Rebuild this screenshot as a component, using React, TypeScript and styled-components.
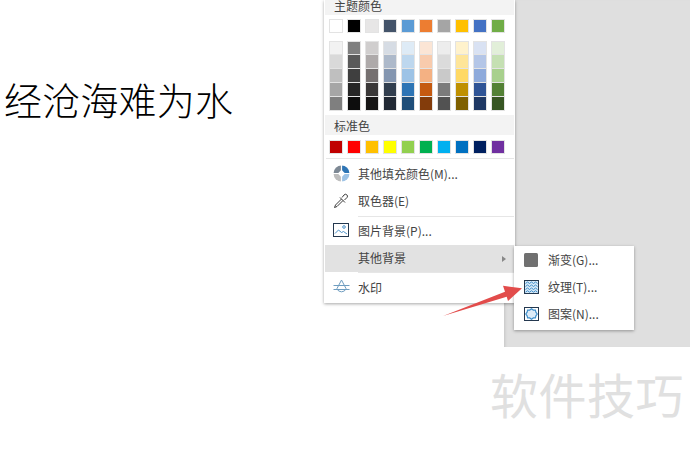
import React from 'react'
import styled, { createGlobalStyle } from 'styled-components'

const CJK = `"Noto Sans CJK SC", "Liberation Sans", sans-serif`

const GlobalStyle = createGlobalStyle`
html, body {
  margin: 0;
  padding: 0;
  background: #fff;
  overflow: hidden;
}
`
const Page = styled.div`
width: 690px;
height: 450px;
background: #fff;
font-family: ${CJK};
`
const TopRow = styled.div`
display: flex;
height: 347px;
`
const Heading = styled.div`
width: 324px;
flex: none;
padding: 75px 0 0 4px;
box-sizing: border-box;
font-family: "Noto Sans CJK SC", serif;
font-weight: 300;
font-size: 38px;
line-height: 48px;
letter-spacing: 0.2px;
color: #000;
white-space: nowrap;
`
const Menu = styled.div`
position: relative;
z-index: 1;
flex: none;
width: 191px;
height: 303px;
margin-right: -11px;
background: #fff;
box-shadow: 0 1px 3px rgba(0, 0, 0, 0.35);
box-sizing: border-box;
padding: 0 0 0 1px;
font-size: 12px;
color: #444;
`
const SectionTitle = styled.div<{ $h: number; $mt?: number; $lh?: number }>`
height: ${p => p.$h}px;
line-height: ${p => p.$lh ?? p.$h}px;
margin-top: ${p => p.$mt ?? 0}px;
background: #f3f3f3;
margin-right: 1px;
padding-left: 9px;
`
const SwatchRow = styled.div<{ $mt: number }>`
display: flex;
gap: 4px;
padding-left: 4px;
margin-top: ${p => p.$mt}px;
`
const Swatch = styled.div<{ $c: string }>`
width: 14px;
height: 14px;
box-sizing: border-box;
background: ${p => p.$c};
border: 1px solid #e3e3e3;
flex: none;
`
const Ramp = styled.div`
display: flex;
flex-direction: column;
width: 14px;
flex: none;
`
const RampCell = styled.div<{ $c: string }>`
height: 14px;
box-sizing: border-box;
background: ${p => p.$c};
border: 1px solid #e3e3e3;
border-top-width: 0;
&:first-child { border-top-width: 1px; }
`
const Divider = styled.div<{ $ml: number; $mt?: number }>`
height: 1px;
background: #e6e6e6;
margin: ${p => p.$mt ?? 0}px 1px 0 ${p => p.$ml}px;
`
const Item = styled.div<{ $h: number; $active?: boolean }>`
position: relative;
display: flex;
align-items: center;
height: ${p => p.$h}px;
box-sizing: border-box;
padding-bottom: 2px;
background: ${p => (p.$active ? '#e2e2e2' : 'transparent')};
margin-right: 1px;
`
const IconSlot = styled.div`
width: 33px;
flex: none;
box-sizing: border-box;
padding-right: 1px;
display: flex;
justify-content: center;
`
const Caret = styled.div`
position: absolute;
right: 8px;
top: 50%;
margin-top: -3px;
border-left: 4px solid #888;
border-top: 3px solid transparent;
border-bottom: 3px solid transparent;
`
const Submenu = styled.div`
position: absolute;
z-index: 2;
left: 189px;
top: 1px;
width: 120px;
height: 84px;
box-sizing: border-box;
background: #fff;
box-shadow: 0 1px 3px rgba(0, 0, 0, 0.35);
`
const SubItem = styled.div`
display: flex;
align-items: center;
height: 27px;
font-size: 12px;
color: #444;
`
const SubIcon = styled.div`
width: 34px;
flex: none;
display: flex;
justify-content: center;
`
const Backdrop = styled.div`
flex: 1;
background: #dfdfdf;
box-shadow: inset 3px 0 3px -2px #c4c4c4;
`
const Watermark = styled.div`
text-align: right;
padding: 15px 6px 0 0;
font-size: 48px;
line-height: 62px;
letter-spacing: 0.5px;
color: #e0e0e0;
`
const ArrowMark = styled.svg`
position: absolute;
z-index: 3;
left: 442px;
top: 280px;
`

const themeBase = ['#ffffff', '#000000', '#e7e6e6', '#44546a', '#5b9bd5', '#ed7d31', '#a5a5a5', '#ffc000', '#4472c4', '#70ad47']
const ramps = [
  ['#f2f2f2', '#d9d9d9', '#bfbfbf', '#a6a6a6', '#7f7f7f'],
  ['#7f7f7f', '#595959', '#3f3f3f', '#262626', '#0d0d0d'],
  ['#d0cece', '#aeaaaa', '#757070', '#3a3838', '#171616'],
  ['#d6dce4', '#adb9ca', '#8496b0', '#323f4f', '#222a35'],
  ['#deebf6', '#bdd7ee', '#9dc3e6', '#2e75b5', '#1f4e79'],
  ['#fbe5d5', '#f8cbad', '#f4b183', '#c55a11', '#833c0b'],
  ['#ededed', '#dbdbdb', '#c9c9c9', '#7b7b7b', '#525252'],
  ['#fff2cc', '#fee599', '#ffd965', '#bf9000', '#7f6000'],
  ['#d9e2f3', '#b4c6e7', '#8eaadb', '#2f5496', '#1f3864'],
  ['#e2efd9', '#c5e0b3', '#a8d08d', '#538135', '#375623'],
]
const standard = ['#c00000', '#ff0000', '#ffc000', '#ffff00', '#92d050', '#00b050', '#00b0f0', '#0070c0', '#002060', '#7030a0']

const FillIcon = () => (
  <svg width="17" height="17" viewBox="0 0 17 17">
    <path d="M8.500.500A8 8 0 0 0 .500 8.500h8z" fill="#7d8894" />
    <path d="M8.500.500a8 8 0 0 1 8 8h-8z" fill="#2e75b5" />
    <path d="M16.500 8.500a8 8 0 0 1-8 8v-8z" fill="#9dc3e6" />
    <path d="M8.500 16.500a8 8 0 0 1-8-8h8z" fill="#bdbdbd" />
    <path d="M8.500 0v17M0 8.500h17" stroke="#fff" strokeWidth="1.200" />
    <path d="M8.500 4.800 12.200 8.500 8.500 12.200 4.800 8.500z" fill="#fff" />
  </svg>
)
const PickerIcon = () => (
  <svg width="16" height="16" viewBox="0 0 16 16" fill="none" stroke="#3c3c3c" strokeWidth="1">
    <path d="M7 4.500 12 9.500" />
    <path d="M8.500 6 2.500 12l-1 2.500 2.500-1 6-6" />
    <path d="M9 4.500l2-2.500a1.600 1.600 0 0 1 3 2.500L11.500 7" />
  </svg>
)
const PictureIcon = () => (
  <svg width="16" height="14" viewBox="0 0 16 14" fill="none">
    <rect x="0.500" y="0.500" width="15" height="13" stroke="#24384f" />
    <circle cx="11" cy="4" r="1.300" stroke="#4a90c8" />
    <path d="M2 10.500l3.500-3.500 3 2.500 2-1 3.500 2.500" stroke="#4a90c8" />
  </svg>
)
const WatermarkIcon = () => (
  <svg width="17" height="16" viewBox="0 0 17 16" fill="none" stroke="#6f9dc0" strokeWidth="1">
    <path d="M8.500 1 4 9.500a4.700 4.700 0 0 0 9 0z" />
    <path d="M0.500 6.500h16M0.500 10.500h16" />
  </svg>
)
const GradientIcon = () => (
  <svg width="14" height="14" viewBox="0 0 14 14">
    <rect width="14" height="14" rx="1.500" fill="#707070" />
  </svg>
)
const TextureIcon = () => (
  <svg width="15" height="14" viewBox="0 0 15 14" fill="none">
    <rect x="0.500" y="0.500" width="14" height="13" fill="#d7e8f6" stroke="#24384f" />
    <path d="M1.500 3.500l2-1.500 2 1.500 2-1.500 2 1.500 2-1.500 2 1.500M1.500 6.500l2-1.500 2 1.500 2-1.500 2 1.500 2-1.500 2 1.500M1.500 9.500l2-1.500 2 1.500 2-1.500 2 1.500 2-1.500 2 1.500M1.500 12.200l2-1.500 2 1.500 2-1.500 2 1.500 2-1.500 2 1.500" stroke="#3d8ecb" />
  </svg>
)
const PatternIcon = () => (
  <svg width="15" height="14" viewBox="0 0 15 14" fill="none">
    <rect x="0.500" y="0.500" width="14" height="13" stroke="#24384f" />
    <path d="M7.500 1.800 9.300 3.100 11.400 3.100 11.900 5.200 13.200 7 11.900 8.800 11.400 10.900 9.300 10.900 7.500 12.200 5.700 10.900 3.600 10.900 3.100 8.800 1.800 7 3.100 5.200 3.600 3.100 5.700 3.100z" fill="#dcebf8" stroke="#3d8ecb" strokeWidth="1.200" />
  </svg>
)

export default function App() {
  return (
    <Page>
      <GlobalStyle />
      <TopRow>
        <Heading>经沧海难为水</Heading>
        <Menu>
          <SectionTitle $h={15} $lh={12}>主题颜色</SectionTitle>
          <SwatchRow $mt={4}>
            {themeBase.map((c, i) => <Swatch key={i} $c={c} />)}
          </SwatchRow>
          <SwatchRow $mt={8}>
            {ramps.map((ramp, i) => (
              <Ramp key={i}>
                {ramp.map((c, j) => <RampCell key={j} $c={c} />)}
              </Ramp>
            ))}
          </SwatchRow>
          <SectionTitle $h={20} $lh={22} $mt={4}>标准色</SectionTitle>
          <SwatchRow $mt={5}>
            {standard.map((c, i) => <Swatch key={i} $c={c} />)}
          </SwatchRow>
          <Divider $ml={1} $mt={4} />
          <Item $h={30}>
            <IconSlot><FillIcon /></IconSlot>
            其他填充颜色(M)...
          </Item>
          <Item $h={25}>
            <IconSlot><PickerIcon /></IconSlot>
            取色器(E)
          </Item>
          <Divider $ml={33} $mt={2} />
          <Item $h={28}>
            <IconSlot><PictureIcon /></IconSlot>
            图片背景(P)...
          </Item>
          <Item $h={27} $active>
            <IconSlot />
            其他背景
            <Caret />
            <Submenu>
              <SubItem>
                <SubIcon><GradientIcon /></SubIcon>
                渐变(G)...
              </SubItem>
              <SubItem>
                <SubIcon><TextureIcon /></SubIcon>
                纹理(T)...
              </SubItem>
              <SubItem>
                <SubIcon><PatternIcon /></SubIcon>
                图案(N)...
              </SubItem>
            </Submenu>
          </Item>
          <Divider $ml={33} />
          <Item $h={30}>
            <IconSlot><WatermarkIcon /></IconSlot>
            水印
          </Item>
        </Menu>
        <Backdrop />
      </TopRow>
      <Watermark>软件技巧</Watermark>
      <ArrowMark width="82" height="38" viewBox="0 0 82 38">
        <path d="M1 36 63 11.700 61 5.700 80 8.300 66 21 64.700 16.700z" fill="#e24c4b" />
      </ArrowMark>
    </Page>
  )
}
